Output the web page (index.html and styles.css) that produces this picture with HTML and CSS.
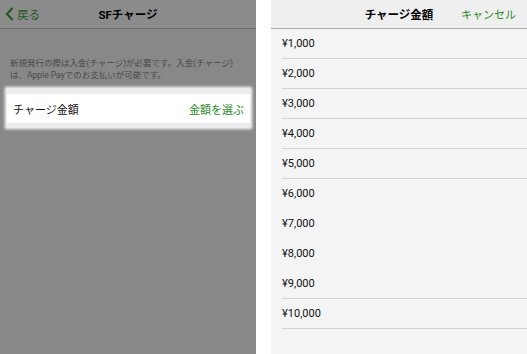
FILE: index.html
```html
<!DOCTYPE html>
<html>
    <head>
        <meta charset="utf-8">
        <title>SFチャージ</title>
        <link rel="stylesheet" href="styles.css">
    </head>
    <body>
        <div class="screen">
            <div class="pane pane-dim">
                <div class="nav">
                    <div class="nav-back">
                        <svg width="9" height="14" viewBox="0 0 9 14"><path d="M7.5 1 L2 7 L7.5 13" fill="none" stroke="#1f5c1f" stroke-width="2.2"/></svg>
                        <span>戻る</span>
                    </div>
                    <h1 class="nav-title">SFチャージ</h1>
                    <div></div>
                </div>
                <p class="note">新規発行の際は入金(チャージ)が必要です。入金(チャージ)<br>は、Apple Payでのお支払いが可能です。</p>
                <div class="group">
                    <div class="cell">
                        <span>チャージ金額</span>
                        <span class="cell-link">金額を選ぶ</span>
                    </div>
                </div>
            </div>
            <div class="gap"></div>
            <div class="pane pane-sheet">
                <div class="nav nav-light">
                    <div></div>
                    <h1 class="nav-title">チャージ金額</h1>
                    <div class="nav-cancel">キャンセル</div>
                </div>
                <ul class="amounts">
                    <li>¥1,000</li>
                    <li>¥2,000</li>
                    <li>¥3,000</li>
                    <li>¥4,000</li>
                    <li>¥5,000</li>
                    <li class="no-line">¥6,000</li>
                    <li class="no-line">¥7,000</li>
                    <li class="no-line">¥8,000</li>
                    <li>¥9,000</li>
                    <li>¥10,000</li>
                </ul>
            </div>
        </div>
    </body>
</html>
```

FILE: styles.css
```css
body {
    margin: 0;
    font-family: "Roboto", "Noto Sans CJK JP", sans-serif;
    background-color: #ffffff;
}
.screen {
    display: flex;
    height: 354px;
    width: 527px;
    overflow: hidden;
}
.pane {
    width: 256px;
    flex-shrink: 0;
}
.gap {
    width: 15px;
    background-color: #ffffff;
}
.pane-dim {
    background-color: #888888;
}
.pane-sheet {
    background-color: #f4f4f4;
}
.nav {
    height: 29px;
    display: grid;
    grid-template-columns: 1fr auto 1fr;
    align-items: center;
    background-color: #8b8b8b;
    border-bottom: 1px solid #6c6c6c;
    box-sizing: border-box;
}
.nav-light {
    background-color: #efefef;
    border-bottom: 1px solid #acacac;
}
.nav-back {
    display: flex;
    align-items: center;
    gap: 3px;
    padding-left: 5px;
    font-size: 11.5px;
    color: #1f5c1f;
}
.nav-title {
    margin: 0;
    font-size: 11.5px;
    font-weight: 700;
    color: #000000;
}
.nav-cancel {
    justify-self: end;
    padding-right: 11px;
    font-size: 11px;
    color: #2b8a2b;
}
.note {
    margin: 28px 0 0 0;
    padding: 0 10px;
    font-size: 8.5px;
    line-height: 12px;
    color: #4a4a4a;
}
.group {
    margin: 8px 6px 0 7px;
    padding: 5px 0 4px 0;
    background-color: #ebebf0;
    box-shadow: 0 0 3px 2px #ffffff;
}
.cell {
    display: flex;
    justify-content: space-between;
    align-items: center;
    height: 29px;
    padding: 0 6px;
    background-color: #ffffff;
    font-size: 11px;
    color: #111111;
}
.cell-link {
    color: #2b8a2b;
}
.amounts {
    list-style: none;
    margin: 0;
    padding: 0 0 0 11px;
}
.amounts li {
    height: 30px;
    line-height: 30px;
    font-size: 11px;
    color: #111111;
    border-bottom: 1px solid #d4d4d4;
    box-sizing: border-box;
}
.amounts li.no-line {
    border-bottom-color: transparent;
}
```
